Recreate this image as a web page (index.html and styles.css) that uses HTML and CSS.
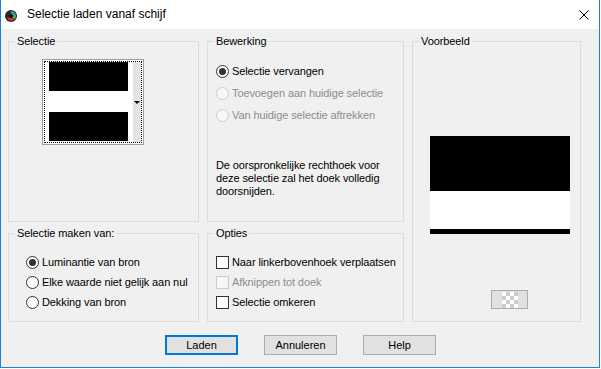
FILE: index.html
```html
<!DOCTYPE html>
<html lang="nl">
<head>
    <meta charset="UTF-8">
    <title>Selectie laden vanaf schijf</title>
    <link rel="stylesheet" href="styles.css">
</head>
<body>
    <div class="window">
        <div class="titlebar">
            <svg class="app-icon" width="16" height="16" viewBox="0 0 16 16">
                <circle cx="7" cy="9" r="6" fill="#2b2b2b"/>
                <path d="M7 9 L7 4 A5 5 0 0 1 11.3 6.5 Z" fill="#2f9be0"/>
                <path d="M7 9 L11.3 6.5 A5 5 0 0 1 10.5 12.5 Z" fill="#39b54a"/>
                <path d="M7 9 L10.5 12.5 A5 5 0 0 1 3 11.5 Z" fill="#d8262d"/>
                <circle cx="7" cy="9" r="2" fill="#111"/>
            </svg>
            <span class="title">Selectie laden vanaf schijf</span>
            <svg class="close" width="10" height="10" viewBox="0 0 10 10">
                <path d="M0.5 0.5 L9.5 9.5 M9.5 0.5 L0.5 9.5" stroke="#000" stroke-width="1"/>
            </svg>
        </div>

        <div class="dialog">
            <div class="groups">
                <!-- Selectie -->
                <fieldset class="group g-selectie">
                    <legend>Selectie</legend>
                    <div class="thumb">
                        <div class="thumb-focus">
                            <div class="thumb-img">
                                <div class="blk"></div>
                                <div class="wht"></div>
                                <div class="blk"></div>
                            </div>
                            <div class="thumb-strip"><span class="arrow"></span></div>
                        </div>
                    </div>
                </fieldset>

                <!-- Bewerking -->
                <fieldset class="group g-bewerking">
                    <legend>Bewerking</legend>
                    <div class="choices wide">
                        <div class="row"><span class="radio checked"></span>Selectie vervangen</div>
                        <div class="row disabled"><span class="radio"></span>Toevoegen aan huidige selectie</div>
                        <div class="row disabled"><span class="radio"></span>Van huidige selectie aftrekken</div>
                    </div>
                    <p class="note">De oorspronkelijke rechthoek voor<br>deze selectie zal het doek volledig<br>doorsnijden.</p>
                </fieldset>

                <!-- Voorbeeld -->
                <fieldset class="group g-voorbeeld">
                    <legend>Voorbeeld</legend>
                    <div class="preview">
                        <div class="p-top"></div>
                        <div class="p-mid"></div>
                        <div class="p-bot"></div>
                    </div>
                    <div class="checker-btn"><span class="checker"></span></div>
                </fieldset>

                <!-- Selectie maken van -->
                <fieldset class="group g-bron">
                    <legend>Selectie maken van:</legend>
                    <div class="choices">
                        <div class="row"><span class="radio checked"></span>Luminantie van bron</div>
                        <div class="row"><span class="radio"></span>Elke waarde niet gelijk aan nul</div>
                        <div class="row"><span class="radio"></span>Dekking van bron</div>
                    </div>
                </fieldset>

                <!-- Opties -->
                <fieldset class="group g-opties">
                    <legend>Opties</legend>
                    <div class="choices">
                        <div class="row"><span class="check"></span>Naar linkerbovenhoek verplaatsen</div>
                        <div class="row disabled"><span class="check"></span>Afknippen tot doek</div>
                        <div class="row"><span class="check"></span>Selectie omkeren</div>
                    </div>
                </fieldset>
            </div>

            <div class="buttons">
                <button class="btn default">Laden</button>
                <button class="btn">Annuleren</button>
                <button class="btn">Help</button>
            </div>
        </div>
    </div>
</body>
</html>
```

FILE: styles.css
```css
body {
    margin: 0;
    background: #ffffff;
}
.window {
    width: 600px;
    height: 368px;
    box-sizing: border-box;
    border: 1px solid #1883d7;
    border-top: none;
    background: #f0f0f0;
    font-family: "Liberation Sans", Arial, sans-serif;
    font-size: 11px;
    line-height: 13px;
    letter-spacing: -0.1px;
    color: #000;
}
.titlebar {
    height: 29px;
    background: #ffffff;
    display: flex;
    align-items: center;
    padding-left: 3px;
}
.title {
    margin-left: 7px;
    font-size: 12px;
    letter-spacing: 0;
}
.close {
    margin-left: auto;
    margin-right: 10px;
}
.dialog {
    padding: 6px 0 0 7px;
}
.groups {
    display: grid;
    grid-template-columns: 191px 197px 169px;
    grid-template-rows: 187px 95px;
    column-gap: 8px;
    row-gap: 5px;
}
.group {
    margin: 0;
    padding: 0;
    min-width: 0;
    border: 1px solid #dcdcdc;
}
.group legend {
    margin-left: 6px;
    padding: 0 2px;
    line-height: 13px;
    font-weight: normal;
}
.g-voorbeeld {
    grid-column: 3;
    grid-row: 1 / span 2;
}
.g-bron {
    grid-column: 1;
    grid-row: 2;
}
.g-opties {
    grid-column: 2;
    grid-row: 2;
}

/* selection thumbnail */
.thumb {
    width: 102px;
    height: 86px;
    box-sizing: border-box;
    margin: 11px 0 0 33px;
    border: 1px solid #a0a0a0;
    padding: 1px;
    background: #fff;
}
.thumb-focus {
    height: 100%;
    box-sizing: border-box;
    border: 1px dotted #000;
    display: flex;
}
.thumb-img {
    width: 79px;
    margin-left: 4px;
    display: flex;
    flex-direction: column;
}
.thumb-img .blk {
    height: 29px;
    background: #000;
}
.thumb-img .wht {
    height: 21px;
}
.thumb-strip {
    margin-left: auto;
    width: 8px;
    background: #e3e3e3;
    display: flex;
    align-items: center;
    justify-content: center;
}
.arrow {
    width: 0;
    height: 0;
    border-top: 3px solid #000;
    border-left: 3px solid transparent;
    border-right: 3px solid transparent;
}

/* radio / checkbox rows */
.choices {
    padding: 12px 0 0 17px;
}
.choices.wide {
    padding-left: 8px;
}
.g-opties .choices {
    padding-left: 8px;
}
.row {
    height: 20px;
    display: flex;
    align-items: center;
    white-space: nowrap;
}
.wide .row {
    height: 22px;
}
.row.disabled {
    color: #8d8d8d;
}
.radio, .check {
    width: 13px;
    height: 13px;
    box-sizing: border-box;
    margin-right: 3px;
    border: 1px solid #333;
    background: #fff;
    flex-shrink: 0;
    display: flex;
    align-items: center;
    justify-content: center;
}
.radio {
    border-radius: 50%;
}
.radio.checked::after {
    content: "";
    width: 7px;
    height: 7px;
    border-radius: 50%;
    background: #333;
}
.disabled .radio, .disabled .check {
    border-color: #cccccc;
    background: #f7f7f7;
}
.note {
    margin: 33px 0 0 8px;
}

/* preview */
.preview {
    width: 140px;
    margin: 88px 0 0 17px;
}
.p-top {
    height: 55px;
    background: #000;
}
.p-mid {
    height: 38px;
    background: #fff;
}
.p-bot {
    height: 5px;
    background: #000;
}
.checker-btn {
    width: 37px;
    height: 19px;
    box-sizing: border-box;
    margin: 56px 0 0 78px;
    border: 1px solid #adadad;
    background: #e1e1e1;
    display: flex;
    align-items: center;
    justify-content: center;
}
.checker {
    width: 16px;
    height: 16px;
    background: conic-gradient(#cccccc 25%, #ffffff 0 50%, #cccccc 0 75%, #ffffff 0) 0 0 / 8px 8px;
}

/* buttons */
.buttons {
    display: flex;
    justify-content: center;
    gap: 26px;
    margin: 13px 0 0 -6px;
}
.btn {
    width: 73px;
    height: 20px;
    box-sizing: border-box;
    padding: 0;
    border: 1px solid #adadad;
    background: #e1e1e1;
    font-family: "Liberation Sans", Arial, sans-serif;
    font-size: 11px;
    color: #000;
}
.btn.default {
    border: 2px solid #0078d7;
}
```
